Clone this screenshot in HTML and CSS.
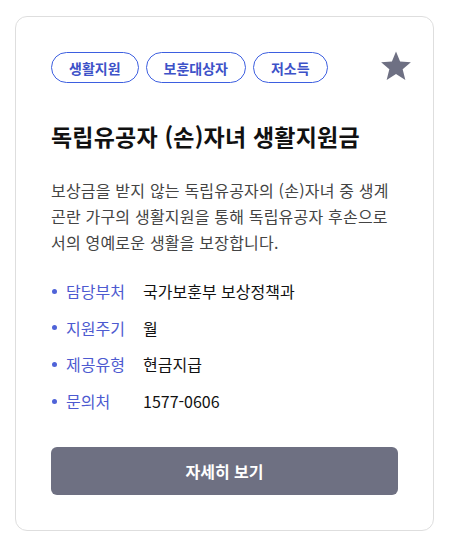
FILE: index.html
```html
<!DOCTYPE html>
<html lang="ko">
<head>
    <meta charset="UTF-8">
    <meta name="viewport" content="width=device-width, initial-scale=1.0">
    <title>독립유공자 (손)자녀 생활지원금</title>
    <link rel="stylesheet" href="styles.css">
</head>
<body>
    <div class="card">
        <div class="card-top">
            <div class="tags">
                <span class="tag">생활지원</span>
                <span class="tag">보훈대상자</span>
                <span class="tag">저소득</span>
            </div>
            <button class="star-btn" aria-label="즐겨찾기" title="즐겨찾기">
                <svg width="34" height="34" viewBox="0 0 24 24" fill="currentColor">
                    <path d="M12 1.8l2.9 7.1 7.6.5-5.8 4.9 1.9 7.5L12 17.7l-6.6 4.1 1.9-7.5-5.8-4.9 7.6-.5z"></path>
                </svg>
            </button>
        </div>

        <h2 class="card-title">독립유공자 (손)자녀 생활지원금</h2>
        <p class="card-desc">보상금을 받지 않는 독립유공자의 (손)자녀 중 생계 곤란 가구의 생활지원을 통해 독립유공자 후손으로서의 영예로운 생활을 보장합니다.</p>

        <ul class="info-list">
            <li class="info-row">
                <span class="info-label">담당부처</span>
                <span class="info-value">국가보훈부 보상정책과</span>
            </li>
            <li class="info-row">
                <span class="info-label">지원주기</span>
                <span class="info-value">월</span>
            </li>
            <li class="info-row">
                <span class="info-label">제공유형</span>
                <span class="info-value">현금지급</span>
            </li>
            <li class="info-row">
                <span class="info-label">문의처</span>
                <span class="info-value">1577-0606</span>
            </li>
        </ul>

        <button class="btn-detail">자세히 보기</button>
    </div>
</body>
</html>
```

FILE: styles.css
```css
* {
    margin: 0;
    padding: 0;
    box-sizing: border-box;
}

body {
    font-family: "Noto Sans CJK KR", "Noto Sans", sans-serif;
    background: #fff;
    padding: 16px 17px 16px 15px;
}

.card {
    width: 419px;
    border: 1px solid #dedede;
    border-radius: 12px;
    background: #fff;
    padding: 35px;
}

.card-top {
    display: flex;
    align-items: flex-start;
    justify-content: space-between;
}

.tags {
    display: flex;
    gap: 7px;
}

.tag {
    display: inline-flex;
    align-items: center;
    height: 31px;
    padding: 0 17px;
    border: 1px solid #3d5fe0;
    border-radius: 16px;
    color: #3d52c8;
    font-size: 14px;
    font-weight: 700;
}

.star-btn {
    border: none;
    background: none;
    color: #6e7083;
    width: 34px;
    height: 34px;
    margin-right: -15px;
    margin-top: -3px;
    cursor: pointer;
}

.card-title {
    margin-top: 37px;
    font-size: 23px;
    font-weight: 700;
    color: #111;
    line-height: 32px;
    letter-spacing: 0.2px;
}

.card-desc {
    margin-top: 25px;
    font-size: 16px;
    line-height: 26px;
    color: #444;
    letter-spacing: 0.2px;
}

.info-list {
    list-style: none;
    margin-top: 24px;
    display: flex;
    flex-direction: column;
    gap: 12.7px;
}

.info-row {
    display: flex;
    align-items: center;
    font-size: 16px;
    line-height: 24px;
}

.info-row::before {
    content: "";
    width: 5px;
    height: 5px;
    border-radius: 50%;
    background: #4f63d8;
    margin-left: 1px;
    margin-right: 9px;
}

.info-label {
    width: 77px;
    color: #4d5ad0;
}

.info-value {
    color: #111;
}

.btn-detail {
    display: block;
    width: 100%;
    height: 48px;
    margin-top: 34px;
    border: none;
    border-radius: 6px;
    background: #6e7082;
    color: #fff;
    font-family: inherit;
    font-size: 16px;
    font-weight: 700;
    cursor: pointer;
}
```
